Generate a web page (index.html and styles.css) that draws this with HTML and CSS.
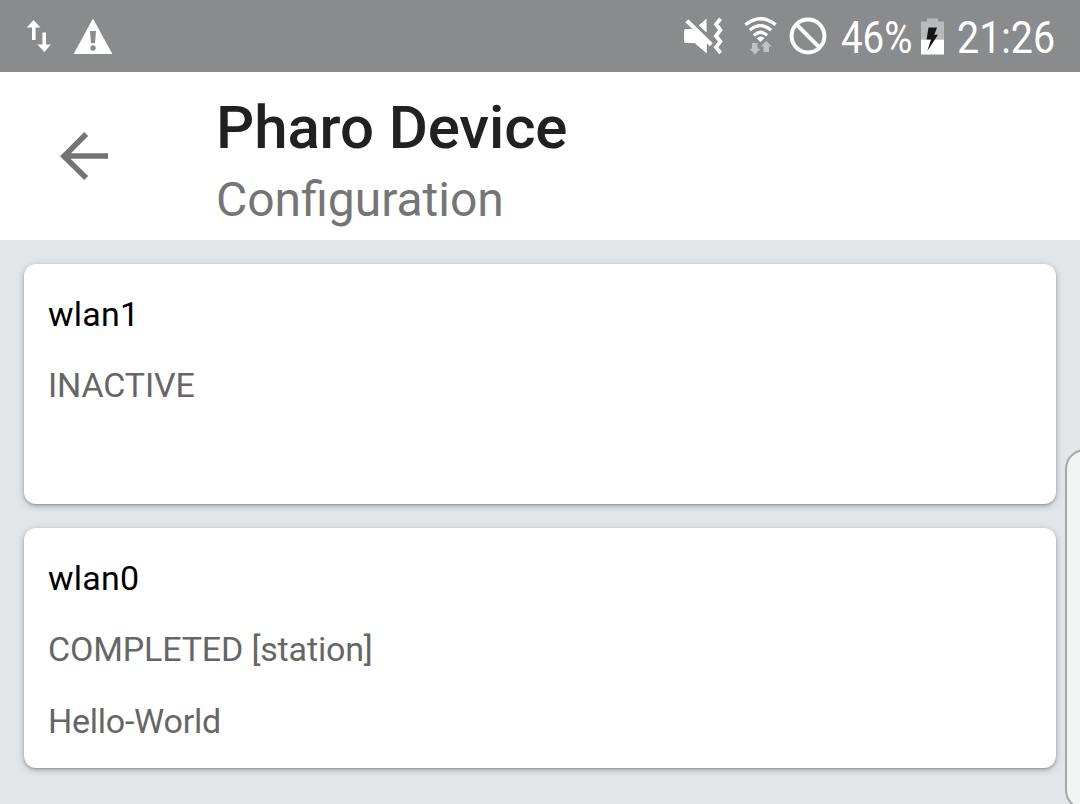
FILE: index.html
```html
<!DOCTYPE html>
<html lang="en">
<head>
<meta charset="utf-8">
<title>Pharo Device</title>
<link rel="stylesheet" href="styles.css">
</head>
<body>
<header class="status">
  <svg class="icon-transfer" width="26" height="34" viewBox="26 19 26 34"><path fill="#fff" d="M33.5 20 40.5 27.5H35.6V40H32V27.5H26.8ZM42.4 32.5H46V44.5H51L44.3 52 37.5 44.5H42.4Z"/></svg>
  <svg class="icon-warning" width="40" height="37" viewBox="73 18 40 37"><path fill="#fff" d="M93 18.6 112.4 54H73.6Z"/><path fill="#8a8b8d" d="M90 31H96L95 43.2H91Z"/><circle cx="93" cy="48" r="2.7" fill="#8a8b8d"/></svg>
  <div class="spacer"></div>
  <svg class="icon-mute" width="40" height="38" viewBox="683 17 40 38"><path fill="#fff" d="M686 29H692L706.8 42V53.5L694.5 43H686Q684 43 684 41V31Q684 29 686 29ZM706.6 18.6V32.5L698.6 25.4Z"/><path d="M686.8 20.8 711.3 44.8" stroke="#fff" stroke-width="4.2"/><path d="M720.6 18.7 716 24.2 720.4 30 716 36 720.4 41.5 716 47.2 720.6 53" fill="none" stroke="#fff" stroke-width="3.8"/></svg>
  <svg class="icon-wifi" width="34" height="38" viewBox="744 17 34 38"><g fill="none" stroke="#fff" stroke-width="3.3"><path d="M745.4 24.8Q760.5 12.6 775.6 24.8M749.9 30.2Q760.5 21 771.1 30.2M753.9 35.4Q760.5 29.2 767.1 35.4"/></g><path fill="#fff" d="M756.6 38.2Q760.5 35 764.4 38.2L760.5 42Z"/><path fill="#c0c1c2" d="M752 43H757.5V48.8H760.5L755 54.5 749.6 48.8H752ZM766.3 41 771.8 46.5H769V52H763.6V46.5H760.8Z"/></svg>
  <svg class="icon-block" width="38" height="38" viewBox="788.5 17 38 38"><g fill="none" stroke="#fff" stroke-width="4"><circle cx="807.5" cy="36" r="16.4"/><path d="M795.9 24.4 819.1 47.6"/></g></svg>
  <span class="percent">46%</span>
  <svg class="icon-battery" width="24" height="37" viewBox="921 17.5 24 37"><path fill="#b9babb" d="M927 18H938V21H944V39H921V21H927Z"/><path fill="#fff" d="M921 39H944V54H921Z"/><path fill="#161616" d="M928.5 27H937L934.3 34.2H938L927.3 50.5 931 39H926.6Z"/></svg>
  <span class="clock">21:26</span>
</header>
<nav class="toolbar">
  <svg class="back" width="50" height="50" viewBox="59 131 50 50"><path d="M86.2 134 64 156.2 86.2 178M64 156H108" fill="none" stroke="#747474" stroke-width="5.6"/></svg>
  <div class="titles">
    <h1 class="title">Pharo Device</h1>
    <p class="subtitle">Configuration</p>
  </div>
</nav>
<main class="list">
  <section class="card">
    <h2 class="name">wlan1</h2>
    <p class="detail">INACTIVE</p>
  </section>
  <section class="card">
    <h2 class="name">wlan0</h2>
    <p class="detail">COMPLETED [station]</p>
    <p class="detail last">Hello-World</p>
  </section>
</main>
<div class="edge-handle"></div>
</body>
</html>
```

FILE: styles.css
```css
* { box-sizing: border-box; margin: 0; padding: 0; }
body {
  position: relative;
  width: 1080px;
  height: 804px;
  overflow: hidden;
  background: #e2e6e9;
  font-family: Roboto, "Liberation Sans", sans-serif;
}
svg { display: block; flex: none; }
.status {
  display: flex;
  align-items: flex-start;
  height: 72px;
  padding: 0 25px 0 26px;
  background: #8a8b8d;
  color: #fff;
}
.icon-transfer { margin-top: 19px; }
.icon-warning { margin: 18px 0 0 21px; }
.spacer { flex: 1; }
.icon-mute { margin-top: 17px; }
.icon-wifi { margin: 17px 0 0 21px; }
.icon-block { margin: 17px 0 0 11px; }
.percent, .clock {
  flex: none;
  margin-top: 11px;
  font-size: 45px;
  line-height: 53px;
  transform: scaleX(0.875);
  transform-origin: 0 0;
  white-space: nowrap;
}
.percent { width: 80.5px; margin-left: 14px; transform: scaleX(0.855); }
.icon-battery { margin: 17.5px 0 0 -0.5px; }
.clock { width: 98px; margin-left: 12.5px; }
.toolbar {
  display: flex;
  height: 168px;
  padding-left: 59px;
  background: #fff;
}
.back { margin-top: 59px; }
.titles { margin-left: 107px; padding-top: 21px; }
.title {
  font-size: 60px;
  font-weight: 500;
  line-height: 70px;
  letter-spacing: -0.12px;
  color: #212121;
}
.subtitle {
  margin-top: 9px;
  font-size: 48px;
  line-height: 56px;
  color: #757575;
}
.list {
  display: flex;
  flex-direction: column;
  gap: 24px;
  padding: 24px;
}
.card {
  display: flex;
  flex-direction: column;
  gap: 31px;
  height: 240px;
  padding: 30px 24px;
  border-radius: 12px;
  background: #fff;
  box-shadow: 0 2px 6px rgba(0, 0, 0, 0.28), 0 1px 2px rgba(0, 0, 0, 0.18);
}
.name, .detail {
  font-size: 34px;
  font-weight: 400;
  line-height: 40px;
}
.name { letter-spacing: 0.25px; color: #000; }
.detail { letter-spacing: -0.16px; color: #666; }
.last { margin-top: 1px; letter-spacing: -0.25px; }
.edge-handle {
  position: absolute;
  top: 449px;
  left: 1065px;
  width: 40px;
  height: 361px;
  border: 2px solid #a6a8a9;
  border-radius: 22px;
  background: #f2f4f4;
}
```
